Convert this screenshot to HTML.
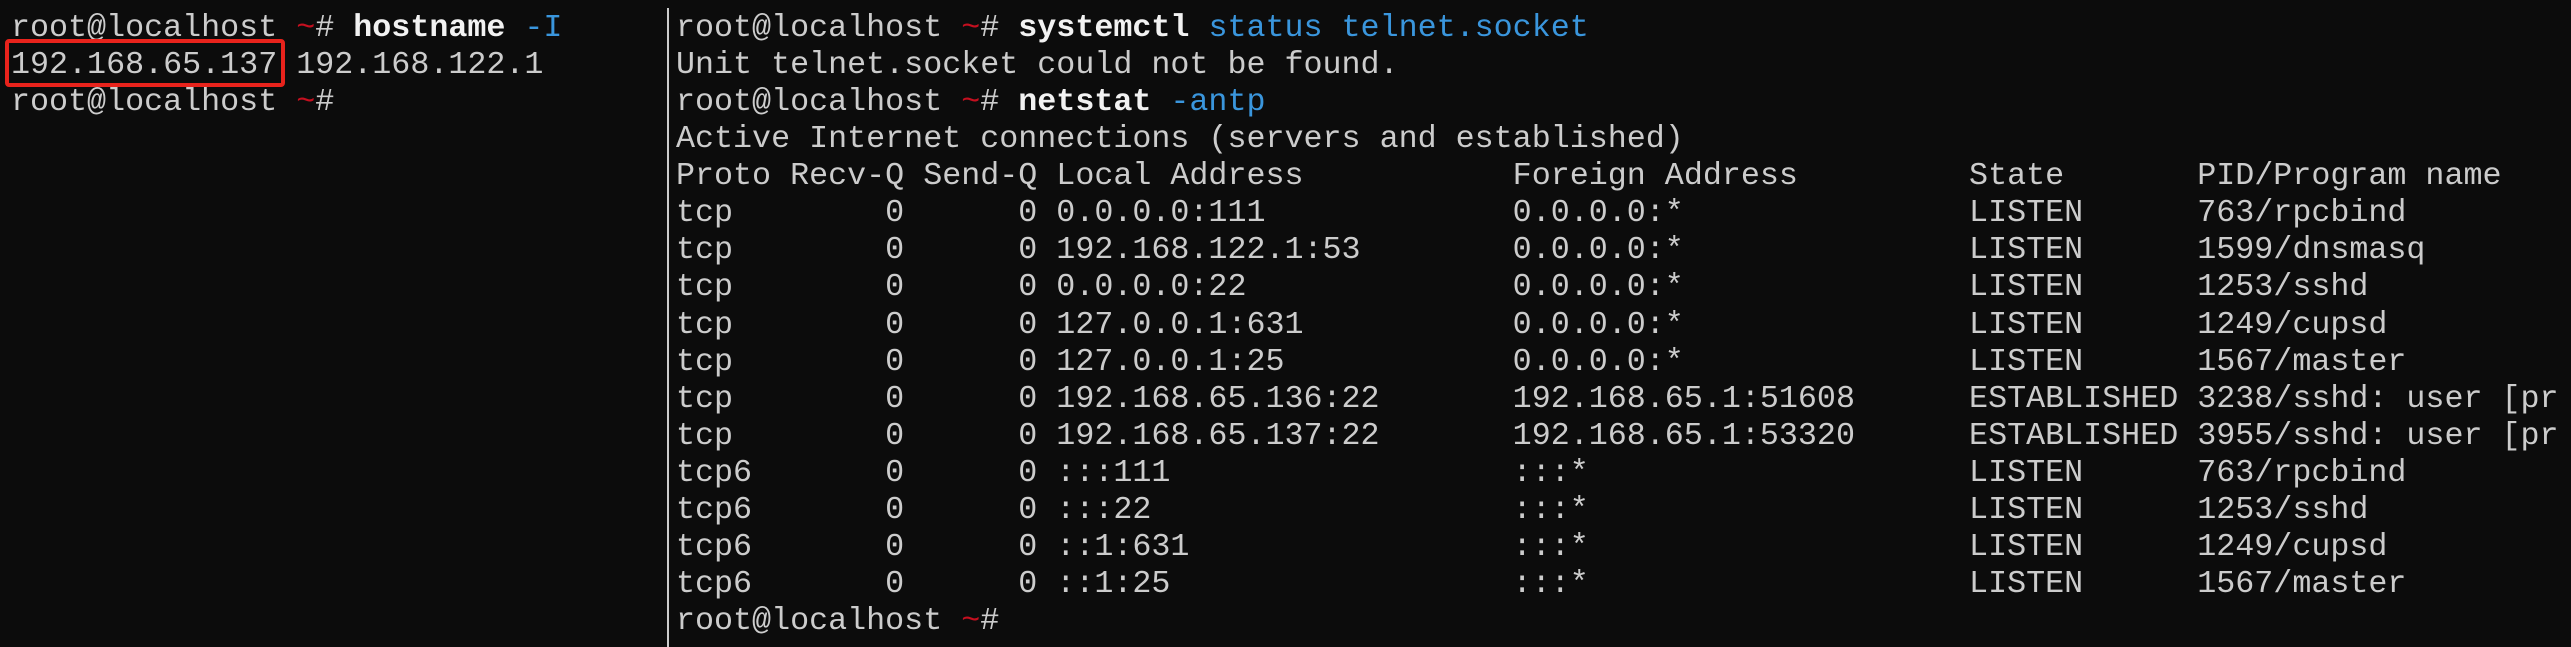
<!DOCTYPE html>
<html><head><meta charset="utf-8"><style>
html,body{margin:0;padding:0;background:#0c0c0c;width:2571px;height:647px;overflow:hidden}
pre{margin:0;position:absolute;font-family:"Liberation Mono","DejaVu Sans Mono",monospace;font-size:31.7px;line-height:37.06px;color:#cccccc;white-space:pre}
.w{color:#f2f2f2;font-weight:600}.b{color:#3a96dd}.r{color:#c50f1f}
#l{left:11px;top:10px}
#rr{left:676px;top:10px}
#div{position:absolute;left:667px;top:8px;width:2px;height:639px;background:#cccccc}
#box{position:absolute;left:5px;top:39px;width:272px;height:40px;border:4px solid #e8231c;border-radius:4px}
</style></head><body>
<pre id="l">root@localhost <span class="r">~</span># <span class="w">hostname</span> <span class="b">-I</span>
192.168.65.137 192.168.122.1
root@localhost <span class="r">~</span>#</pre>
<div id="box"></div>
<div id="div"></div>
<pre id="rr">root@localhost <span class="r">~</span># <span class="w">systemctl</span> <span class="b">status telnet.socket</span>
Unit telnet.socket could not be found.
root@localhost <span class="r">~</span># <span class="w">netstat</span> <span class="b">-antp</span>
Active Internet connections (servers and established)
Proto Recv-Q Send-Q Local Address           Foreign Address         State       PID/Program name
tcp        0      0 0.0.0.0:111             0.0.0.0:*               LISTEN      763/rpcbind
tcp        0      0 192.168.122.1:53        0.0.0.0:*               LISTEN      1599/dnsmasq
tcp        0      0 0.0.0.0:22              0.0.0.0:*               LISTEN      1253/sshd
tcp        0      0 127.0.0.1:631           0.0.0.0:*               LISTEN      1249/cupsd
tcp        0      0 127.0.0.1:25            0.0.0.0:*               LISTEN      1567/master
tcp        0      0 192.168.65.136:22       192.168.65.1:51608      ESTABLISHED 3238/sshd: user [pr
tcp        0      0 192.168.65.137:22       192.168.65.1:53320      ESTABLISHED 3955/sshd: user [pr
tcp6       0      0 :::111                  :::*                    LISTEN      763/rpcbind
tcp6       0      0 :::22                   :::*                    LISTEN      1253/sshd
tcp6       0      0 ::1:631                 :::*                    LISTEN      1249/cupsd
tcp6       0      0 ::1:25                  :::*                    LISTEN      1567/master
root@localhost <span class="r">~</span>#</pre>
</body></html>
